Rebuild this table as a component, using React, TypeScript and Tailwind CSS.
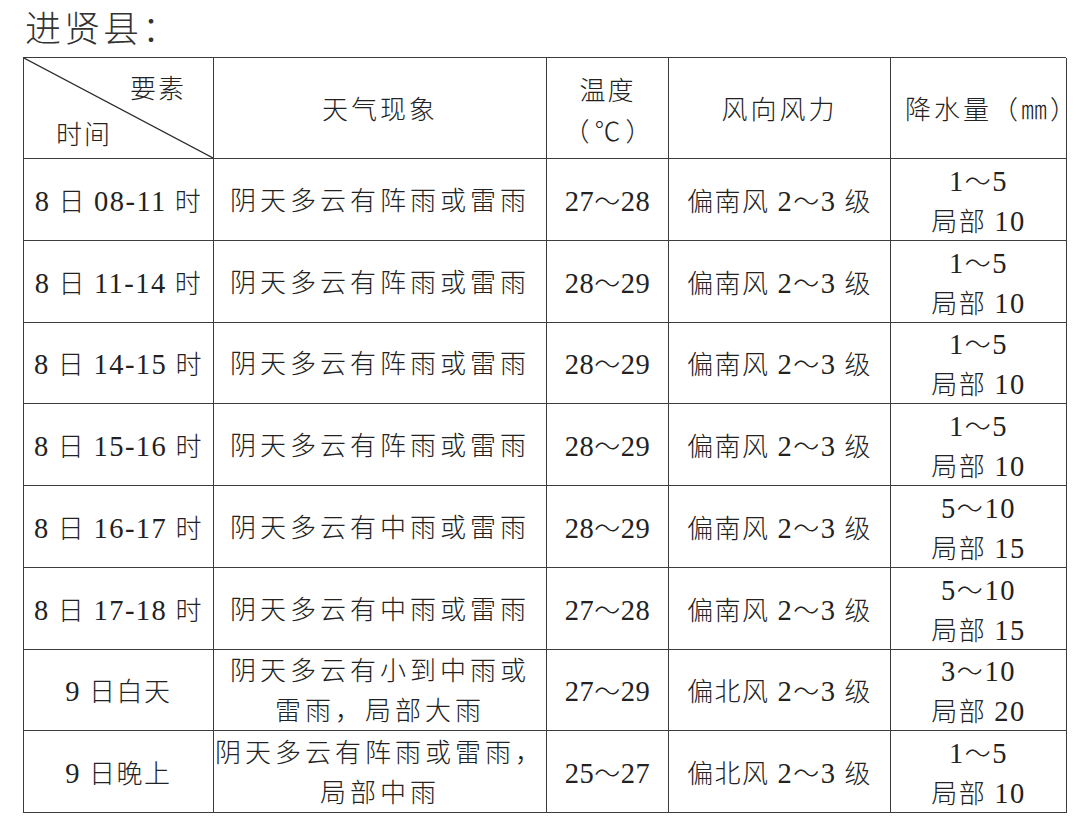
import React from 'react';

type Row = {
  time: string;
  weather: string[];
  temp: string;
  wind: string;
  rain: string[];
};

const rows: Row[] = [
  { time: '8 日 08-11 时', weather: ['阴天多云有阵雨或雷雨'], temp: '27～28', wind: '偏南风 2～3 级', rain: ['1～5', '局部 10'] },
  { time: '8 日 11-14 时', weather: ['阴天多云有阵雨或雷雨'], temp: '28～29', wind: '偏南风 2～3 级', rain: ['1～5', '局部 10'] },
  { time: '8 日 14-15 时', weather: ['阴天多云有阵雨或雷雨'], temp: '28～29', wind: '偏南风 2～3 级', rain: ['1～5', '局部 10'] },
  { time: '8 日 15-16 时', weather: ['阴天多云有阵雨或雷雨'], temp: '28～29', wind: '偏南风 2～3 级', rain: ['1～5', '局部 10'] },
  { time: '8 日 16-17 时', weather: ['阴天多云有中雨或雷雨'], temp: '28～29', wind: '偏南风 2～3 级', rain: ['5～10', '局部 15'] },
  { time: '8 日 17-18 时', weather: ['阴天多云有中雨或雷雨'], temp: '27～28', wind: '偏南风 2～3 级', rain: ['5～10', '局部 15'] },
  { time: '9 日白天', weather: ['阴天多云有小到中雨或', '雷雨，局部大雨'], temp: '27～29', wind: '偏北风 2～3 级', rain: ['3～10', '局部 20'] },
  { time: '9 日晚上', weather: ['阴天多云有阵雨或雷雨，', '局部中雨'], temp: '25～27', wind: '偏北风 2～3 级', rain: ['1～5', '局部 10'] },
];

const cell =
  'border-r-[1.5px] border-b-[1.5px] border-[#3c3c3c] flex flex-col items-center justify-center text-center pt-[5px]';

// digits are set a bit larger than the CJK text, like the original document
const Mixed = ({ text }: { text: string }) => (
  <>
    {text.split(/([0-9-]+)/).map((part, i) =>
      /[0-9]/.test(part) ? (
        <span key={i} className="text-[28.5px]">
          {part}
        </span>
      ) : (
        <span key={i}>{part}</span>
      )
    )}
  </>
);

export default function App() {
  return (
    <div className="w-[1080px] h-[826px] bg-white text-[#222] font-light font-['Liberation_Serif','Noto_Sans_CJK_SC',serif] overflow-hidden">
      <div className="pl-[25px] pt-[8px] h-[57px] text-[36px] leading-[44px] tracking-[3px] text-[#333]">
        进贤县：
      </div>

      <div className="ml-[23px] w-[1043px] grid grid-cols-[190px_333px_122px_222px_176px] grid-rows-[101px_repeat(8,81.75px)] border-l-[1.5px] border-t-[1.5px] border-[#3c3c3c] text-[26px] leading-[39px]">
        {/* header */}
        <div className="relative border-r-[1.5px] border-b-[1.5px] border-[#3c3c3c] flex flex-col justify-between pt-[12px] pb-[3px]">
          <svg className="absolute inset-0 w-full h-full" viewBox="0 0 100 100" preserveAspectRatio="none">
            <line x1="0" y1="0" x2="100" y2="100" stroke="#2a2a2a" strokeWidth="1.2" vectorEffect="non-scaling-stroke" />
          </svg>
          <div className="self-end pr-[27px] tracking-[2px]">要素</div>
          <div className="self-start pl-[32px] tracking-[2px]">时间</div>
        </div>
        <div className={`${cell} tracking-[3px]`}>天气现象</div>
        <div className={`${cell} leading-[38px]`}>
          <div className="tracking-[2px]">温度</div>
          <div className="font-['Noto_Sans_CJK_SC',sans-serif] tracking-[5px] pl-[5px]">（℃）</div>
        </div>
        <div className={`${cell} tracking-[3px]`}>风向风力</div>
        <div className={`${cell} items-start pl-[14px] whitespace-nowrap tracking-[3px]`}>降水量（㎜）</div>

        {rows.map((r) => (
          <React.Fragment key={r.time + r.temp + r.weather[0]}>
            <div className={`${cell} tracking-[1.5px] whitespace-nowrap`}>
              <div>
                <Mixed text={r.time} />
              </div>
            </div>
            <div className={`${cell} tracking-[4px] whitespace-nowrap leading-[40px]`}>
              {r.weather.map((w) => (
                <div key={w}>{w}</div>
              ))}
            </div>
            <div className={`${cell} tracking-[0.5px] whitespace-nowrap`}>
              <div>
                <Mixed text={r.temp} />
              </div>
            </div>
            <div className={`${cell} tracking-[1.5px] whitespace-nowrap`}>
              <div>
                <Mixed text={r.wind} />
              </div>
            </div>
            <div className={`${cell} tracking-[1.5px] whitespace-nowrap`}>
              {r.rain.map((t) => (
                <div key={t}>
                  <Mixed text={t} />
                </div>
              ))}
            </div>
          </React.Fragment>
        ))}
      </div>
    </div>
  );
}
